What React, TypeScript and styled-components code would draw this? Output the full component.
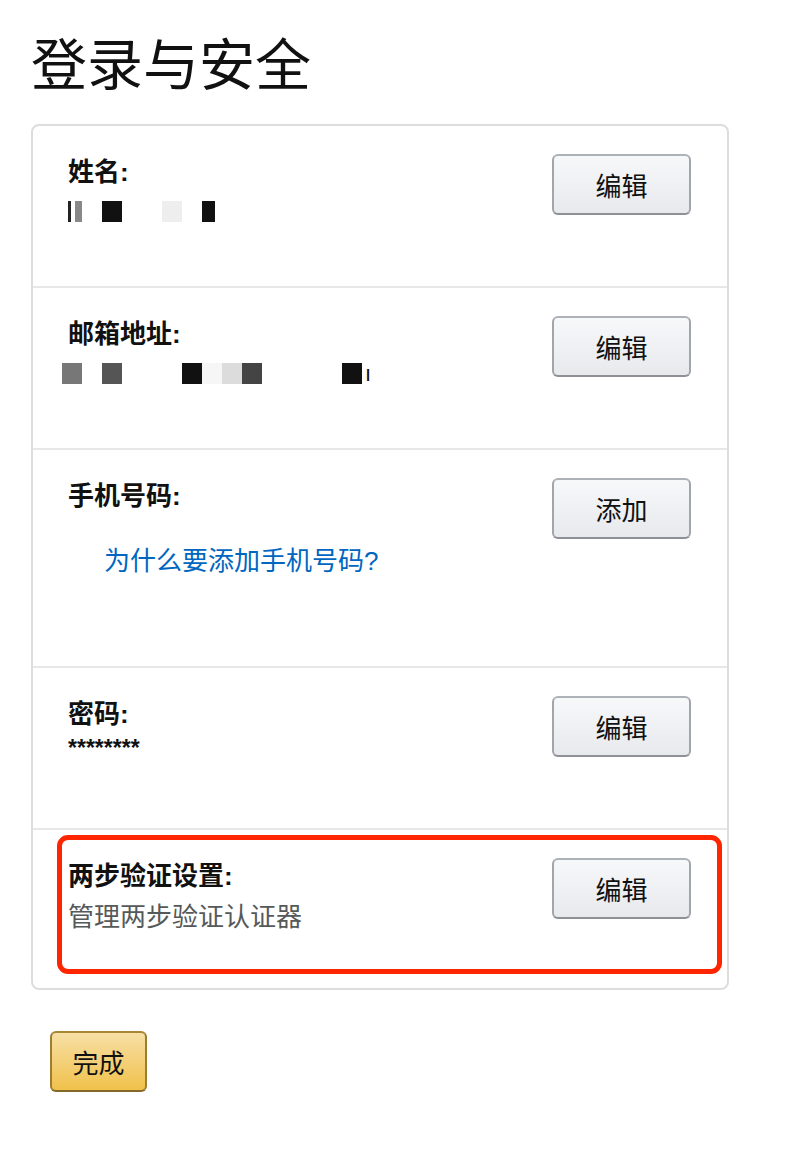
import styled, { createGlobalStyle } from 'styled-components';

const GlobalStyle = createGlobalStyle`
  html, body {
    margin: 0;
    padding: 0;
    background: #fff;
  }
  body {
    font-family: "Liberation Sans", "Noto Sans CJK SC", sans-serif;
    color: #111;
  }
`;

type Cell = { color?: string; w?: number };

const nameCells: Cell[] = [
  { color: 'linear-gradient(to right, transparent 0 6px, #222 6px 9px, transparent 9px 13px, #888 13px)' },
  {},
  { color: '#111' },
  {},
  {},
  { color: '#eeeeee' },
  {},
  { color: '#111', w: 13 },
];

const emailCells: Cell[] = [
  { color: '#777' },
  {},
  { color: '#555' },
  {},
  {},
  {},
  { color: '#111' },
  { color: '#f6f6f6' },
  { color: '#dcdcdc' },
  { color: '#444' },
  {},
  {},
  {},
  {},
  { color: '#111' },
];

const App = () => {
  return (
    <>
      <GlobalStyle />
      <Page>
        <Title>登录与安全</Title>
        <Card>
          <Row $height={160}>
            <Info>
              <Label>姓名:</Label>
              <Mosaic>
                {nameCells.map((c, i) => (
                  <Block key={i} $bg={c.color} $w={c.w} />
                ))}
              </Mosaic>
            </Info>
            <GreyButton>编辑</GreyButton>
          </Row>
          <Row $height={160}>
            <Info>
              <Label>邮箱地址:</Label>
              <Mosaic>
                {emailCells.map((c, i) => (
                  <Block key={i} $bg={c.color} $w={c.w} />
                ))}
                <Tail>ı</Tail>
              </Mosaic>
            </Info>
            <GreyButton>编辑</GreyButton>
          </Row>
          <Row $height={216}>
            <Info>
              <Label>手机号码:</Label>
              <Link href="#">为什么要添加手机号码?</Link>
            </Info>
            <GreyButton>添加</GreyButton>
          </Row>
          <Row $height={160}>
            <Info>
              <Label>密码:</Label>
              <Stars>********</Stars>
            </Info>
            <GreyButton>编辑</GreyButton>
          </Row>
          <Row $height={158} $last>
            <Info>
              <Label>两步验证设置:</Label>
              <Sub>管理两步验证认证器</Sub>
            </Info>
            <GreyButton>编辑</GreyButton>
            <Highlight />
          </Row>
        </Card>
        <DoneButton>完成</DoneButton>
      </Page>
    </>
  );
};

export default App;

const Page = styled.div`
  padding: 27px 31px 40px;
`;

const Title = styled.h1`
  margin: 0 0 30px 0;
  font-family: "Noto Sans CJK SC", sans-serif;
  font-weight: 400;
  font-size: 56px;
  line-height: 67px;
  color: #111;
`;

const Card = styled.div`
  width: 698px;
  box-sizing: border-box;
  border: 2px solid #dddddd;
  border-radius: 8px;
`;

const Row = styled.div<{ $height: number; $last?: boolean }>`
  position: relative;
  height: ${(p) => p.$height}px;
  box-sizing: content-box;
  display: flex;
  justify-content: space-between;
  align-items: flex-start;
  padding: 0 36px 0 35px;
  border-bottom: ${(p) => (p.$last ? 'none' : '2px solid #e7e7e7')};
`;

const Info = styled.div`
  display: flex;
  flex-direction: column;
  padding-top: 30px;
`;

const Label = styled.div`
  font-family: "Liberation Sans", "Noto Sans CJK SC", sans-serif;
  font-weight: 700;
  font-size: 26px;
  line-height: 32px;
  color: #111;
`;

const Mosaic = styled.div`
  display: flex;
  align-items: flex-end;
  margin: 13px 0 0 -6px;
  height: 21px;
`;

const Block = styled.span<{ $bg?: string; $w?: number }>`
  display: block;
  width: ${(p) => p.$w ?? 20}px;
  height: 21px;
  background: ${(p) => p.$bg ?? 'transparent'};
`;

const Tail = styled.span`
  font-size: 22px;
  line-height: 21px;
  margin-left: 3px;
  color: #111;
`;

const Link = styled.a`
  margin: 33px 0 0 36px;
  font-family: "Liberation Sans", "Noto Sans CJK SC", sans-serif;
  font-size: 26px;
  line-height: 32px;
  color: #0066c0;
  text-decoration: none;
`;

const Stars = styled.div`
  margin-top: 4px;
  font-family: "Liberation Sans", sans-serif;
  font-weight: 700;
  font-size: 23px;
  line-height: 28px;
  color: #111;
`;

const Sub = styled.div`
  margin-top: 7px;
  font-family: "Noto Sans CJK SC", sans-serif;
  font-size: 26px;
  line-height: 32px;
  color: #565959;
`;

const GreyButton = styled.button`
  margin-top: 28px;
  width: 139px;
  height: 61px;
  flex-shrink: 0;
  border: 2px solid;
  border-color: #adb1b8 #a2a6ac #8d9096;
  border-radius: 6px;
  background: linear-gradient(to bottom, #f7f8fa, #e7e9ec);
  font-family: "Noto Sans CJK SC", sans-serif;
  font-size: 26px;
  color: #111;
  cursor: pointer;
`;

const Highlight = styled.div`
  position: absolute;
  left: 24px;
  right: 5px;
  top: 5px;
  height: 139px;
  box-sizing: border-box;
  border: 5px solid #ff2500;
  border-radius: 11px;
  pointer-events: none;
`;

const DoneButton = styled.button`
  display: block;
  margin: 41px 0 0 19px;
  width: 97px;
  height: 61px;
  border: 2px solid;
  border-color: #a88734 #9c7e31 #846a29;
  border-radius: 6px;
  background: linear-gradient(to bottom, #f7dfa5, #f0c14b);
  font-family: "Noto Sans CJK SC", sans-serif;
  font-size: 26px;
  color: #111;
  cursor: pointer;
`;
